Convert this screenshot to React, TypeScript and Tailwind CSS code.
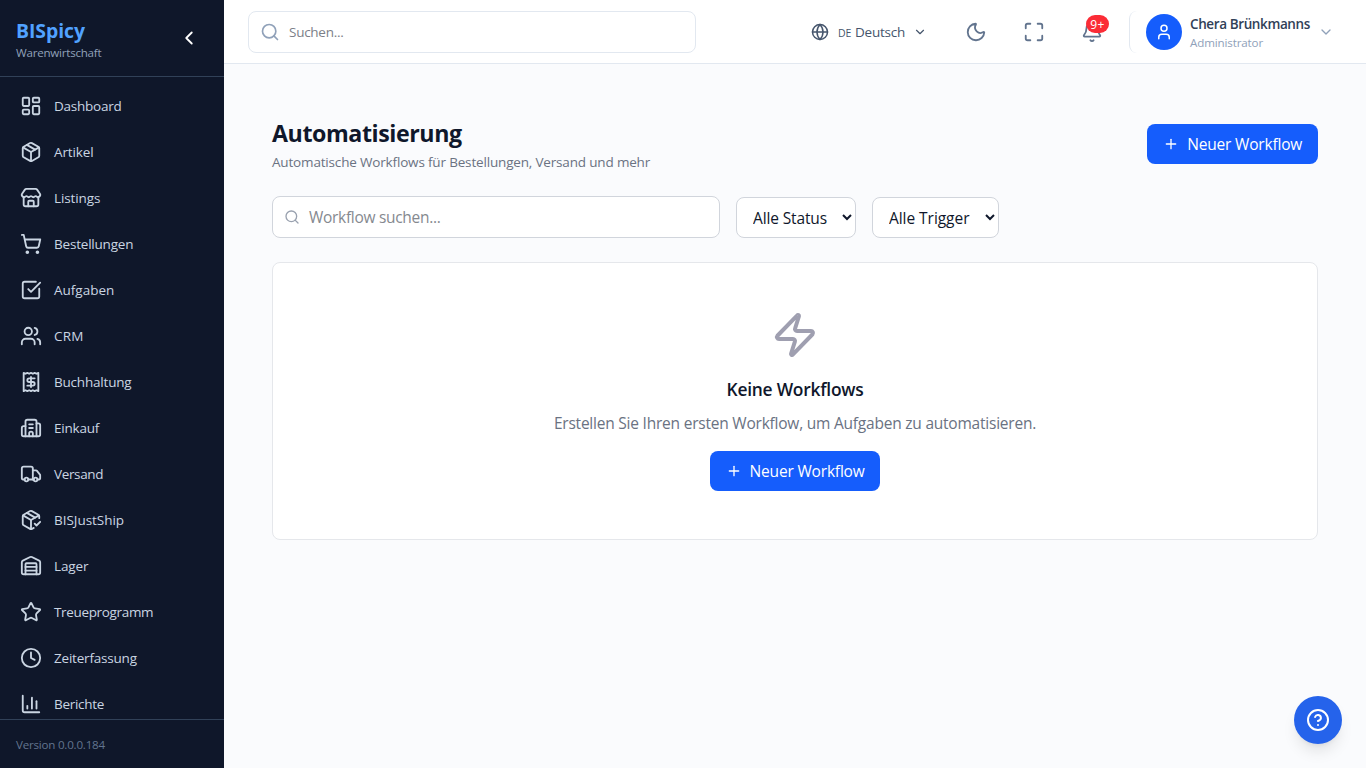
import {
  LayoutDashboard, Package, Store, ShoppingCart, SquareCheckBig, Users, Receipt, Building2, Truck,
  PackageCheck, Warehouse, Star, Clock, ChartColumn, Zap, ChevronLeft, ChevronDown, Search, Globe,
  Moon, Maximize, Bell, User, Plus, CircleQuestionMark, type LucideIcon,
} from 'lucide-react';

const NAV: { icon: LucideIcon; label: string; tracking: string }[] = [
  { icon: LayoutDashboard, label: 'Dashboard', tracking: 'tracking-[-0.23px]' },
  { icon: Package, label: 'Artikel', tracking: 'tracking-[-0.1px]' },
  { icon: Store, label: 'Listings', tracking: 'tracking-[-0.1px]' },
  { icon: ShoppingCart, label: 'Bestellungen', tracking: 'tracking-[-0.2px]' },
  { icon: SquareCheckBig, label: 'Aufgaben', tracking: 'tracking-normal' },
  { icon: Users, label: 'CRM', tracking: 'tracking-[0.2px]' },
  { icon: Receipt, label: 'Buchhaltung', tracking: 'tracking-[-0.2px]' },
  { icon: Building2, label: 'Einkauf', tracking: 'tracking-[-0.2px]' },
  { icon: Truck, label: 'Versand', tracking: 'tracking-[-0.35px]' },
  { icon: PackageCheck, label: 'BISJustShip', tracking: 'tracking-[-0.03px]' },
  { icon: Warehouse, label: 'Lager', tracking: 'tracking-[-0.1px]' },
  { icon: Star, label: 'Treueprogramm', tracking: 'tracking-[-0.34px]' },
  { icon: Clock, label: 'Zeiterfassung', tracking: 'tracking-[-0.2px]' },
  { icon: ChartColumn, label: 'Berichte', tracking: 'tracking-[-0.28px]' },
];

function Sidebar() {
  return (
    <aside className="flex h-full w-56 shrink-0 flex-col bg-[#0f172a]">
      <div className="flex h-[77px] shrink-0 items-center justify-between border-b border-slate-700 px-4">
        <div className="pt-0.5">
          <div className="text-[19.4px] leading-7 font-bold tracking-[-0.05px] text-[#51a2ff]">BISpicy</div>
          <div className="text-[11.6px] leading-4 tracking-[-0.24px] text-slate-400">Warenwirtschaft</div>
        </div>
        <button className="mr-2 text-white">
          <ChevronLeft size={22} />
        </button>
      </div>
      <nav className="min-h-0 flex-1 overflow-hidden px-2 py-2">
        {NAV.map(({ icon: Icon, label, tracking }) => (
          <a key={label} className="mb-1 flex h-[42px] items-center gap-3 px-3 text-slate-300">
            <Icon size={22} className="shrink-0" />
            <span className={`text-[13.5px] leading-5 ${tracking}`}>{label}</span>
          </a>
        ))}
      </nav>
      <div className="shrink-0 border-t border-slate-700 px-4 pt-[17px] pb-[15px] text-[11.6px] leading-4 tracking-[-0.22px] text-slate-500">
        Version 0.0.0.184
      </div>
    </aside>
  );
}

function Topbar() {
  return (
    <header className="flex h-16 shrink-0 items-center border-b border-slate-200 bg-white px-6">
      <div className="flex h-[42px] w-[448px] items-center gap-[9px] rounded-lg border border-slate-200 bg-white pl-[11px]">
        <Search size={20} className="text-slate-400" />
        <span className="text-[13.5px] leading-5 tracking-[-0.27px] text-[#7c8088]">Suchen...</span>
      </div>
      <div className="ml-auto flex items-center text-slate-500">
        <button className="mr-[38px] flex items-center text-slate-600">
          <Globe size={18} />
          <span className="ml-[9px] w-[17px] pt-0.5 text-left text-[10.5px] leading-5">DE</span>
          <span className="w-[58px] text-left text-[13.5px] leading-5 tracking-[-0.24px]">Deutsch</span>
          <ChevronDown size={14} />
        </button>
        <button className="mr-9">
          <Moon size={22} />
        </button>
        <button className="mr-9">
          <Maximize size={22} />
        </button>
        <button className="relative mr-[26px]">
          <Bell size={22} />
          <span className="absolute -top-[6px] left-[5px] flex h-[18px] w-[23px] items-center justify-center rounded-full bg-[#fb2c36] pt-[2px] text-[12px] leading-none tracking-[0.3px] text-white">
            9+
          </span>
        </button>
        <button className="flex h-[42px] items-center rounded-lg border-l border-slate-200 pr-2 pl-4 text-left">
          <span className="flex size-9 items-center justify-center rounded-full bg-[#155dfc] text-white">
            <User size={18} />
          </span>
          <span className="ml-2 w-[128px] pt-px">
            <span className="block text-[13.5px] leading-5 font-semibold tracking-[-0.39px] whitespace-nowrap text-slate-700">
              Chera Brünkmanns
            </span>
            <span className="block text-[11.6px] leading-[17px] tracking-[-0.14px] text-slate-400">Administrator</span>
          </span>
          <ChevronDown size={16} className="text-slate-400" />
        </button>
      </div>
    </header>
  );
}

function NewWorkflowButton() {
  return (
    <button className="flex h-10 items-center gap-2 rounded-lg bg-[#155dfc] px-4 text-[15.5px] leading-6 tracking-[-0.18px] whitespace-nowrap text-white">
      <Plus size={16} className="shrink-0" />
      <span className="w-[114.8px] text-left">Neuer Workflow</span>
    </button>
  );
}

export default function App() {
  return (
    <div className="flex h-screen overflow-hidden bg-[#fafbfd] font-['Open_Sans','Noto_Sans',sans-serif]">
      <Sidebar />
      <div className="flex min-w-0 flex-1 flex-col">
        <Topbar />
        <main className="flex-1 px-12 pt-[52px]">
          <div className="flex items-center justify-between">
            <div>
              <h1 className="pt-px text-[23.2px] leading-8 font-bold tracking-[-0.42px] text-slate-900">Automatisierung</h1>
              <p className="mt-[3px] text-[13.5px] leading-5 tracking-[-0.17px] text-gray-500">
                Automatische Workflows für Bestellungen, Versand und mehr
              </p>
            </div>
            <NewWorkflowButton />
          </div>

          <div className="mt-6 flex items-end gap-4">
            <div className="flex h-[42px] w-[448px] items-center gap-[9px] rounded-lg border border-gray-300 bg-white pl-[11px]">
              <Search size={16} className="text-gray-400" />
              <span className="text-[15.5px] leading-6 tracking-[-0.3px] text-[#85898f]">Workflow suchen...</span>
            </div>
            <select className="h-[41px] w-[120px] rounded-lg border border-gray-300 bg-white px-3 pt-px text-[15.5px] tracking-[-0.13px] text-slate-900">
              <option>Alle Status</option>
            </select>
            <select className="h-[41px] w-[127px] rounded-lg border border-gray-300 bg-white px-3 pt-px text-[15.5px] tracking-[-0.05px] text-slate-900">
              <option>Alle Trigger</option>
            </select>
          </div>

          <section className="mt-6 flex flex-col items-center rounded-lg border border-gray-200 bg-white p-12">
            <Zap size={48} className="text-[#9f9fb0]" />
            <h3 className="mt-4 text-[17.4px] leading-7 font-semibold tracking-[-0.24px] text-slate-900">
              Keine Workflows
            </h3>
            <p className="mt-2 mb-4 text-[15.5px] leading-6 tracking-[-0.22px] text-gray-500">
              Erstellen Sie Ihren ersten Workflow, um Aufgaben zu automatisieren.
            </p>
            <NewWorkflowButton />
          </section>
        </main>
      </div>
      <button className="fixed right-6 bottom-6 flex size-12 items-center justify-center rounded-full bg-[#2563eb] text-white shadow-lg">
        <CircleQuestionMark size={24} />
      </button>
    </div>
  );
}
